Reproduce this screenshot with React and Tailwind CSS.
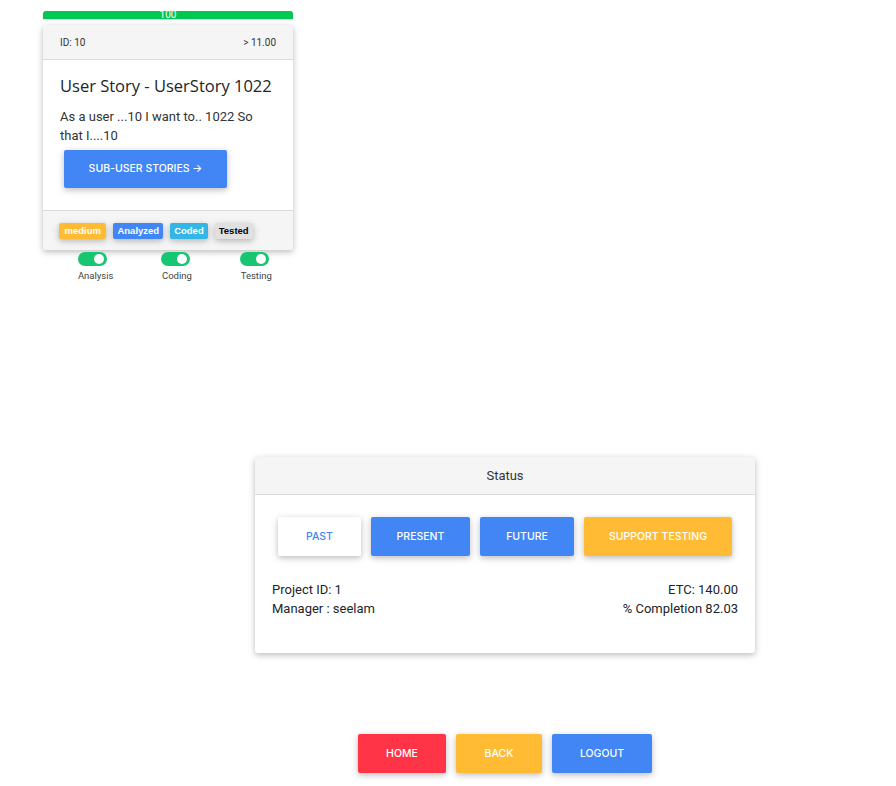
import React from 'react';

// Tableau d'une user story + statut du projet
const shadow = 'shadow-[0_2px_5px_0_rgba(0,0,0,0.16),0_2px_10px_0_rgba(0,0,0,0.12)]';
const heading = "font-['Open_Sans',sans-serif]";
const btnFont = "font-['Inter',sans-serif]";
const body = "font-['Roboto',sans-serif]";

const Toggle = ({ label, width, shift }) => (
    <div className={`${width} flex flex-col items-center`}>
        <div className={`w-[29px] h-[14px] rounded-full bg-[#17c671] flex items-center justify-end pr-[3px] ${shift}`}>
            <div className="w-[10px] h-[10px] rounded-full bg-white" />
        </div>
        <span className={`${body} text-[9.5px] text-[#444] mt-[4px] leading-[12px]`}>{label}</span>
    </div>
);

const Badge = ({ color, text, pad = 'px-[4px]', children }) => (
    <span className={`${color} ${text} ${pad} font-['Liberation_Sans',sans-serif] font-bold text-[9.5px] leading-[16px] h-[16px] rounded-[2px] ${shadow}`}>{children}</span>
);

const Btn = ({ className, children }) => (
    <button className={`${btnFont} ${shadow} font-medium rounded-[2px] text-[10.5px] uppercase ${className}`}>{children}</button>
);

const App = () => {
    return (
        <div className="min-h-screen bg-white pt-[11px] pl-[43px]">
            <div className="w-[250px]">
                <div className="h-[9px] bg-[#e0e4e8] rounded-t-[3px]">
                    <div className={`${body} h-[8px] bg-[#00c853] rounded-t-[3px] text-white text-[10px] leading-[8px] text-center`}>100</div>
                </div>

                <div className={`mt-[5px] bg-white rounded-[3px] overflow-hidden ${shadow}`}>
                    <div className={`${body} h-[35px] bg-[#f5f5f5] border-b border-[#dcdcdc] flex items-center justify-between px-[17px] text-[10px] text-[#333]`}>
                        <span>ID: 10</span>
                        <span>&gt; 11.00</span>
                    </div>
                    <div className="px-[17px] pt-[14px] pb-[22px]">
                        <h2 className={`${heading} text-[16.5px] text-[#212529] leading-[24px] whitespace-nowrap`}>User Story - UserStory 1022</h2>
                        <p className={`${body} text-[13px] leading-[19px] text-[#333] mt-[9px]`}>As a user ...10 I want to.. 1022 So that I....10</p>
                        <Btn className="ml-[4px] mt-[5px] w-[163px] h-[38px] bg-[#4285f4] text-white">Sub-User Stories →</Btn>
                    </div>
                    <div className="h-[40px] bg-[#f5f5f5] border-t border-[#dcdcdc] flex items-center gap-[7px] px-[16px]">
                        <Badge color="bg-[#ffbb33]" text="text-white" pad="px-[5.5px]">medium</Badge>
                        <Badge color="bg-[#4285f4]" text="text-white">Analyzed</Badge>
                        <Badge color="bg-[#33b5e5]" text="text-white">Coded</Badge>
                        <Badge color="bg-[#e0e0e0]" text="text-black">Tested</Badge>
                    </div>
                </div>

                <div className="flex pl-[14px] mt-[2px]">
                    <Toggle label="Analysis" width="w-[80px]" shift="-ml-[7px]" />
                    <Toggle label="Coding" width="w-[84px] ml-[2px]" shift="-ml-[3px]" />
                    <Toggle label="Testing" width="w-[76px] ml-[2px]" shift="-ml-[3px]" />
                </div>
            </div>

            <div className="ml-[212px] w-[500px] mt-[175px]">
                <div className={`bg-white rounded-[3px] overflow-hidden ${shadow}`}>
                    <div className={`${body} h-[38px] bg-[#f5f5f5] border-b border-[#dcdcdc] flex items-center justify-center text-[13px] text-[#333]`}>Status</div>
                    <div className="px-[17px] pt-[22px] pb-[35px]">
                        <div className="flex gap-[10px] pl-[6px]">
                            <Btn className="w-[83px] h-[39px] bg-white text-[#4285f4]">Past</Btn>
                            <Btn className="w-[99px] h-[39px] bg-[#4285f4] text-white">Present</Btn>
                            <Btn className="w-[94px] h-[39px] bg-[#4285f4] text-white">Future</Btn>
                            <Btn className="w-[148px] h-[39px] bg-[#ffbb33] text-white">Support Testing</Btn>
                        </div>
                        <div className={`${body} flex justify-between text-[13px] leading-[19px] text-[#212529] mt-[24px]`}>
                            <div>
                                <div>Project ID: 1</div>
                                <div>Manager : seelam</div>
                            </div>
                            <div className="text-right">
                                <div>ETC: 140.00</div>
                                <div>% Completion 82.03</div>
                            </div>
                        </div>
                    </div>
                </div>

                <div className="flex justify-center gap-[10px] mt-[81px]">
                    <Btn className="w-[88px] h-[39px] bg-[#ff3547] text-white">Home</Btn>
                    <Btn className="w-[86px] h-[39px] bg-[#ffbb33] text-white">Back</Btn>
                    <Btn className="w-[100px] h-[39px] bg-[#4285f4] text-white">Logout</Btn>
                </div>
            </div>
        </div>
    );
};

export default App;
